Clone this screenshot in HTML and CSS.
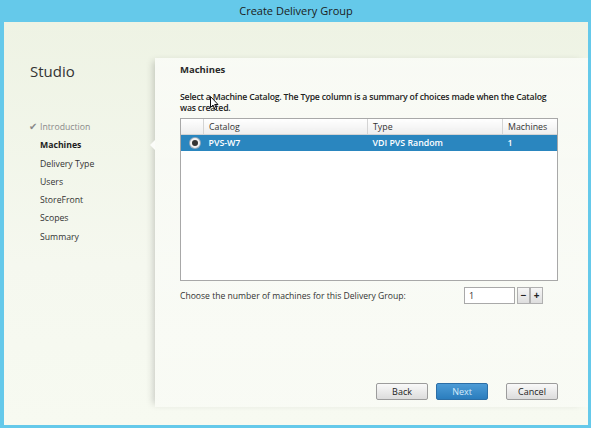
FILE: index.html
```html
<!DOCTYPE html>
<html lang="en">
<head>
    <meta charset="UTF-8">
    <title>Create Delivery Group</title>
    <link rel="stylesheet" href="styles.css">
</head>
<body>
    <div class="window">
        <div class="titlebar">Create Delivery Group</div>
        <div class="client">
            <aside class="sidebar">
                <h1>Studio</h1>
                <ul class="steps">
                    <li class="done"><span class="check">&#10004;</span>Introduction</li>
                    <li class="current">Machines</li>
                    <li>Delivery Type</li>
                    <li>Users</li>
                    <li>StoreFront</li>
                    <li>Scopes</li>
                    <li>Summary</li>
                </ul>
            </aside>
            <main class="panel">
                <span class="notch"></span>
                <h2>Machines</h2>
                <p class="lead">
                    Select a Machine Catalog. The Type column is a summary of choices made when the Catalog was created.
                    <svg class="cursor" width="9" height="15" viewBox="0 0 9 15">
                        <path d="M0.5 0.5 L0.5 11.5 L3 9 L5 13.5 L6.6 12.8 L4.7 8.5 L8 8.5 Z" fill="#fff" stroke="#111" stroke-width="1"/>
                    </svg>
                </p>
                <div class="grid">
                    <table>
                        <thead>
                            <tr>
                                <th class="col-radio"></th>
                                <th class="col-catalog">Catalog</th>
                                <th class="col-type">Type</th>
                                <th class="col-count">Machines</th>
                            </tr>
                        </thead>
                        <tbody>
                            <tr class="selected">
                                <td class="col-radio"><span class="radio"></span></td>
                                <td>PVS-W7</td>
                                <td>VDI PVS Random</td>
                                <td>1</td>
                            </tr>
                        </tbody>
                    </table>
                </div>
                <div class="count-row">
                    <span>Choose the number of machines for this Delivery Group:</span>
                    <div class="spinner">
                        <input type="text" value="1">
                        <button class="step-btn">&minus;</button>
                        <button class="step-btn">+</button>
                    </div>
                </div>
                <div class="actions">
                    <button class="btn">Back</button>
                    <button class="btn primary">Next</button>
                    <button class="btn cancel">Cancel</button>
                </div>
            </main>
        </div>
    </div>
</body>
</html>
```

FILE: styles.css
```css
body {
    margin: 0;
    font-family: "Open Sans", "Noto Sans", sans-serif;
    color: #222;
}

.window {
    width: 591px;
    height: 428px;
    background: #65c9ea;
    display: flex;
    flex-direction: column;
    box-sizing: border-box;
    padding: 0 3px 3px 4px;
}

.titlebar {
    height: 22px;
    line-height: 21px;
    text-align: center;
    font-size: 11px;
    color: #1b1b1b;
}

.client {
    flex: 1;
    display: flex;
    background: linear-gradient(180deg, #eef3e4 0%, #f5f8ef 60%, #f7faf1 100%);
}

.sidebar {
    width: 151px;
    padding: 39px 0 0 26px;
    box-sizing: border-box;
}

.sidebar h1 {
    margin: 0;
    font-size: 15px;
    font-weight: normal;
    line-height: 20px;
    color: #333;
}

.steps {
    list-style: none;
    margin: 37px 0 0;
    padding: 0;
}

.steps li {
    font-size: 8.7px;
    line-height: 18.3px;
    padding-left: 10px;
    color: #333;
    position: relative;
}

.steps li.done {
    color: #8a8a8a;
}

.steps .check {
    position: absolute;
    left: -1px;
    top: 0;
    font-size: 9.5px;
    color: #888;
}

.steps li.current {
    font-weight: bold;
    color: #1e1e1e;
}

.panel {
    flex: 1;
    position: relative;
    margin: 36px 0 18px;
    padding: 5px 30px 7px 25px;
    display: flex;
    flex-direction: column;
    background: linear-gradient(180deg, rgba(255, 255, 255, 0.6), rgba(255, 255, 255, 0.25));
    box-shadow: -5px 0 7px -3px rgba(0, 0, 0, 0.18);
}

.notch {
    position: absolute;
    left: -5px;
    top: 82px;
    border-top: 5px solid transparent;
    border-bottom: 5px solid transparent;
    border-right: 5px solid #fbfcf9;
}

.panel h2 {
    margin: 0;
    font-size: 9.5px;
    line-height: 13px;
    font-weight: bold;
    color: #2a2a2a;
}

.lead {
    position: relative;
    margin: 16px 0 4px;
    font-size: 8.7px;
    line-height: 11px;
    font-weight: 600;
    letter-spacing: -0.2px;
    color: #222;
}

.cursor {
    position: absolute;
    left: 30px;
    top: 4px;
}

.grid {
    height: 163px;
    border: 1px solid #a8a8a8;
    background: #fff;
    box-sizing: border-box;
}

table {
    width: 100%;
    border-collapse: collapse;
    font-size: 8.8px;
}

th {
    height: 15px;
    padding: 0 0 0 5px;
    text-align: left;
    font-weight: normal;
    color: #333;
    background: linear-gradient(180deg, #ffffff, #eeeeee);
    border-right: 1px solid #d4d4d4;
    border-bottom: 1px solid #d4d4d4;
}

th:last-child {
    border-right: none;
}

.col-radio {
    width: 17px;
}

.col-catalog {
    width: 158px;
}

.col-type {
    width: 129px;
}

td {
    height: 16px;
    padding: 0 0 0 5px;
    font-weight: 600;
}

tr.selected td {
    background: #2a86bf;
    color: #fff;
}

.radio {
    display: block;
    width: 6px;
    height: 6px;
    margin-left: 4px;
    border-radius: 50%;
    background: #333;
    border: 2px solid #f2f2f2;
    box-shadow: 0 0 0 1px #9ab;
}

.count-row {
    display: flex;
    justify-content: space-between;
    align-items: center;
    margin-top: 6px;
    padding-right: 15px;
    font-size: 8.6px;
    color: #333;
}

.spinner {
    display: flex;
    align-items: center;
}

.spinner input {
    width: 51px;
    height: 17px;
    box-sizing: border-box;
    border: 1px solid #a9a9a9;
    padding: 0 4px;
    font-family: inherit;
    font-size: 9px;
    color: #333;
    margin-right: 2px;
}

.step-btn {
    width: 13px;
    height: 17px;
    padding: 0;
    border: 1px solid #b0b0b0;
    background: linear-gradient(180deg, #f6f6f6, #dedede);
    font-family: inherit;
    font-size: 10px;
    font-weight: bold;
    line-height: 13px;
    color: #222;
}

.actions {
    margin-top: auto;
    display: flex;
    justify-content: flex-end;
    gap: 8px;
}

.btn {
    width: 52px;
    height: 17px;
    padding: 0;
    border: 1px solid #9c9c9c;
    border-radius: 2px;
    background: linear-gradient(180deg, #f9f9f9, #dcdcdc);
    font-family: inherit;
    font-size: 9px;
    color: #222;
}

.btn.primary {
    border-color: #2c6ea6;
    background: linear-gradient(180deg, #4c9bd6, #2b7dbd);
    color: #d5ebfb;
}

.btn.cancel {
    margin-left: 10px;
}
```
